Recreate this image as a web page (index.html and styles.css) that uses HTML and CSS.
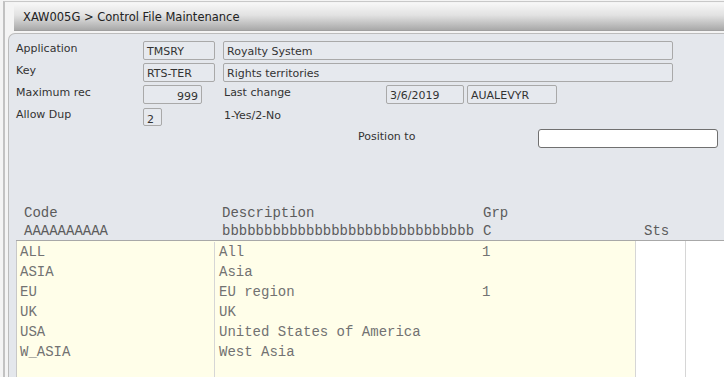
FILE: index.html
```html
<!DOCTYPE html>
<html lang="en">
<head>
    <meta charset="UTF-8">
    <meta name="viewport" content="width=device-width, initial-scale=1.0">
    <title>XAW005G - Control File Maintenance</title>
    <link rel="stylesheet" href="styles.css">
</head>
<body>
    <div class="app">
        <div class="title-bar">XAW005G &gt; Control File Maintenance</div>

        <div class="panel">
            <div class="form">
                <div class="form-row">
                    <span class="label">Application</span>
                    <span class="field code-field">TMSRY</span>
                    <span class="field desc-field">Royalty System</span>
                </div>
                <div class="form-row">
                    <span class="label">Key</span>
                    <span class="field code-field">RTS-TER</span>
                    <span class="field desc-field">Rights territories</span>
                </div>
                <div class="form-row">
                    <span class="label">Maximum rec</span>
                    <span class="field num-field">999</span>
                    <span class="label change-label">Last change</span>
                    <span class="field date-field">3/6/2019</span>
                    <span class="field user-field">AUALEVYR</span>
                </div>
                <div class="form-row">
                    <span class="label">Allow Dup</span>
                    <span class="field dup-field">2</span>
                    <span class="hint">1-Yes/2-No</span>
                </div>
                <div class="form-row position-row">
                    <span class="label">Position to</span>
                    <span class="field position-field"></span>
                </div>
            </div>

            <div class="grid-head">
                <div class="head-line">
                    <span class="h-code">Code</span>
                    <span class="h-desc">Description</span>
                    <span class="h-grp">Grp</span>
                </div>
                <div class="head-line">
                    <span class="h-code">AAAAAAAAAA</span>
                    <span class="h-desc">bbbbbbbbbbbbbbbbbbbbbbbbbbbbbb</span>
                    <span class="h-grp">C</span>
                    <span class="h-sts">Sts</span>
                </div>
            </div>

            <div class="grid">
                <div class="grid-main">
                    <div class="grid-row"><span class="c-code">ALL</span><span class="c-desc">All</span><span class="c-grp">1</span></div>
                    <div class="grid-row"><span class="c-code">ASIA</span><span class="c-desc">Asia</span><span class="c-grp"></span></div>
                    <div class="grid-row"><span class="c-code">EU</span><span class="c-desc">EU region</span><span class="c-grp">1</span></div>
                    <div class="grid-row"><span class="c-code">UK</span><span class="c-desc">UK</span><span class="c-grp"></span></div>
                    <div class="grid-row"><span class="c-code">USA</span><span class="c-desc">United States of America</span><span class="c-grp"></span></div>
                    <div class="grid-row"><span class="c-code">W_ASIA</span><span class="c-desc">West Asia</span><span class="c-grp"></span></div>
                    <div class="grid-row filler"><span class="c-code"></span><span class="c-desc"></span><span class="c-grp"></span></div>
                </div>
                <div class="grid-sts"></div>
                <div class="grid-extra"></div>
            </div>
        </div>
    </div>
</body>
</html>
```

FILE: styles.css
```css
/* General Styles */
html, body {
    height: 100%;
}

body {
    margin: 0;
    padding: 1px 0 0 3px;
    box-sizing: border-box;
    background-color: #f4f4f4;
    font-family: "DejaVu Sans", Verdana, sans-serif;
    font-size: 11px;
    color: #333333;
    overflow: hidden;
}

.app {
    box-sizing: border-box;
    height: 100%;
    display: flex;
    flex-direction: column;
    border-top: 1px solid #c8c8c8;
    border-left: 2px solid #c2c2c2;
}

/* Title bar */
.title-bar {
    flex-shrink: 0;
    margin: 1px 0 0 9px;
    height: 27px;
    line-height: 28px;
    padding-left: 9px;
    font-size: 11.5px;
    color: #222222;
    background: linear-gradient(to bottom, #f7f7f7 0%, #e2e2e2 45%, #a9a9a9 100%);
    border-bottom: 1px solid #a0a0a0;
}

/* Main panel */
.panel {
    flex: 1;
    min-height: 0;
    display: flex;
    flex-direction: column;
    margin: 2px 0 0 3px;
    background-color: #e4e7ec;
    border: 1px solid #bcbcbc;
    border-right: none;
    border-bottom: none;
    border-top-left-radius: 7px;
}

.form {
    padding: 7px 0 0 7px;
    display: flex;
    flex-direction: column;
    gap: 3px;
}

.form-row {
    display: flex;
    align-items: center;
    height: 19px;
}

.label {
    width: 127px;
    flex-shrink: 0;
    margin-top: -4px;
}

.field {
    box-sizing: border-box;
    height: 19px;
    line-height: 19px;
    padding: 0 3px;
    border: 1px solid #a9a9a9;
    border-radius: 2px;
    background-color: #e6e9ee;
    color: #333333;
    white-space: nowrap;
}

.code-field {
    width: 72px;
}

.desc-field {
    width: 450px;
    margin-left: 8px;
}

.num-field {
    width: 59px;
    text-align: right;
    line-height: 21px;
}

.change-label {
    width: 162px;
    margin-left: 22px;
}

.date-field {
    width: 78px;
}

.user-field {
    width: 90px;
    margin-left: 3px;
}

.dup-field {
    width: 19px;
    height: 18px;
    line-height: 21px;
}

.hint {
    margin-left: 62px;
    margin-top: -2px;
}

.position-row {
    height: 18px;
}

.position-row .label {
    width: 180px;
    margin-left: 342px;
    margin-top: -3px;
}

.position-field {
    width: 180px;
    height: 19px;
    background-color: #ffffff;
    border: 1px solid #707070;
    border-radius: 3px;
}

/* Grid header */
.grid-head {
    flex-shrink: 0;
    margin-top: 57px;
    padding-left: 15px;
    font-family: "Liberation Mono", "Courier New", monospace;
    font-size: 14px;
    color: #5c5c5c;
}

.head-line {
    display: flex;
    height: 18px;
    line-height: 19px;
}

.h-code {
    width: 198px;
}

.h-desc {
    width: 261px;
}

.h-grp {
    width: 161px;
}

/* Grid body */
.grid {
    flex: 1;
    min-height: 0;
    display: flex;
    margin-left: 7px;
    border-top: 1px solid #a8a8a8;
    font-family: "Liberation Mono", "Courier New", monospace;
    font-size: 14px;
    color: #727272;
}

.grid-main {
    width: 619px;
    display: flex;
    flex-direction: column;
    padding-top: 1px;
    background-color: #fffee9;
    border-left: 1px solid #c8c8c8;
    box-sizing: border-box;
}

.grid-row {
    display: flex;
    height: 20px;
    line-height: 21px;
    flex-shrink: 0;
}

.grid-row.filler {
    flex: 1;
}

.c-code {
    width: 198px;
    padding-left: 3px;
    box-sizing: border-box;
    border-right: 1px solid #d6d6d6;
}

.c-desc {
    width: 263px;
    padding-left: 4px;
    box-sizing: border-box;
    white-space: nowrap;
}

.c-grp {
    padding-left: 4px;
}

.grid-sts {
    width: 49px;
    background-color: #ffffff;
    border-left: 1px solid #d6d6d6;
}

.grid-extra {
    flex: 1;
    background-color: #ffffff;
    border-left: 1px solid #d6d6d6;
}
```
